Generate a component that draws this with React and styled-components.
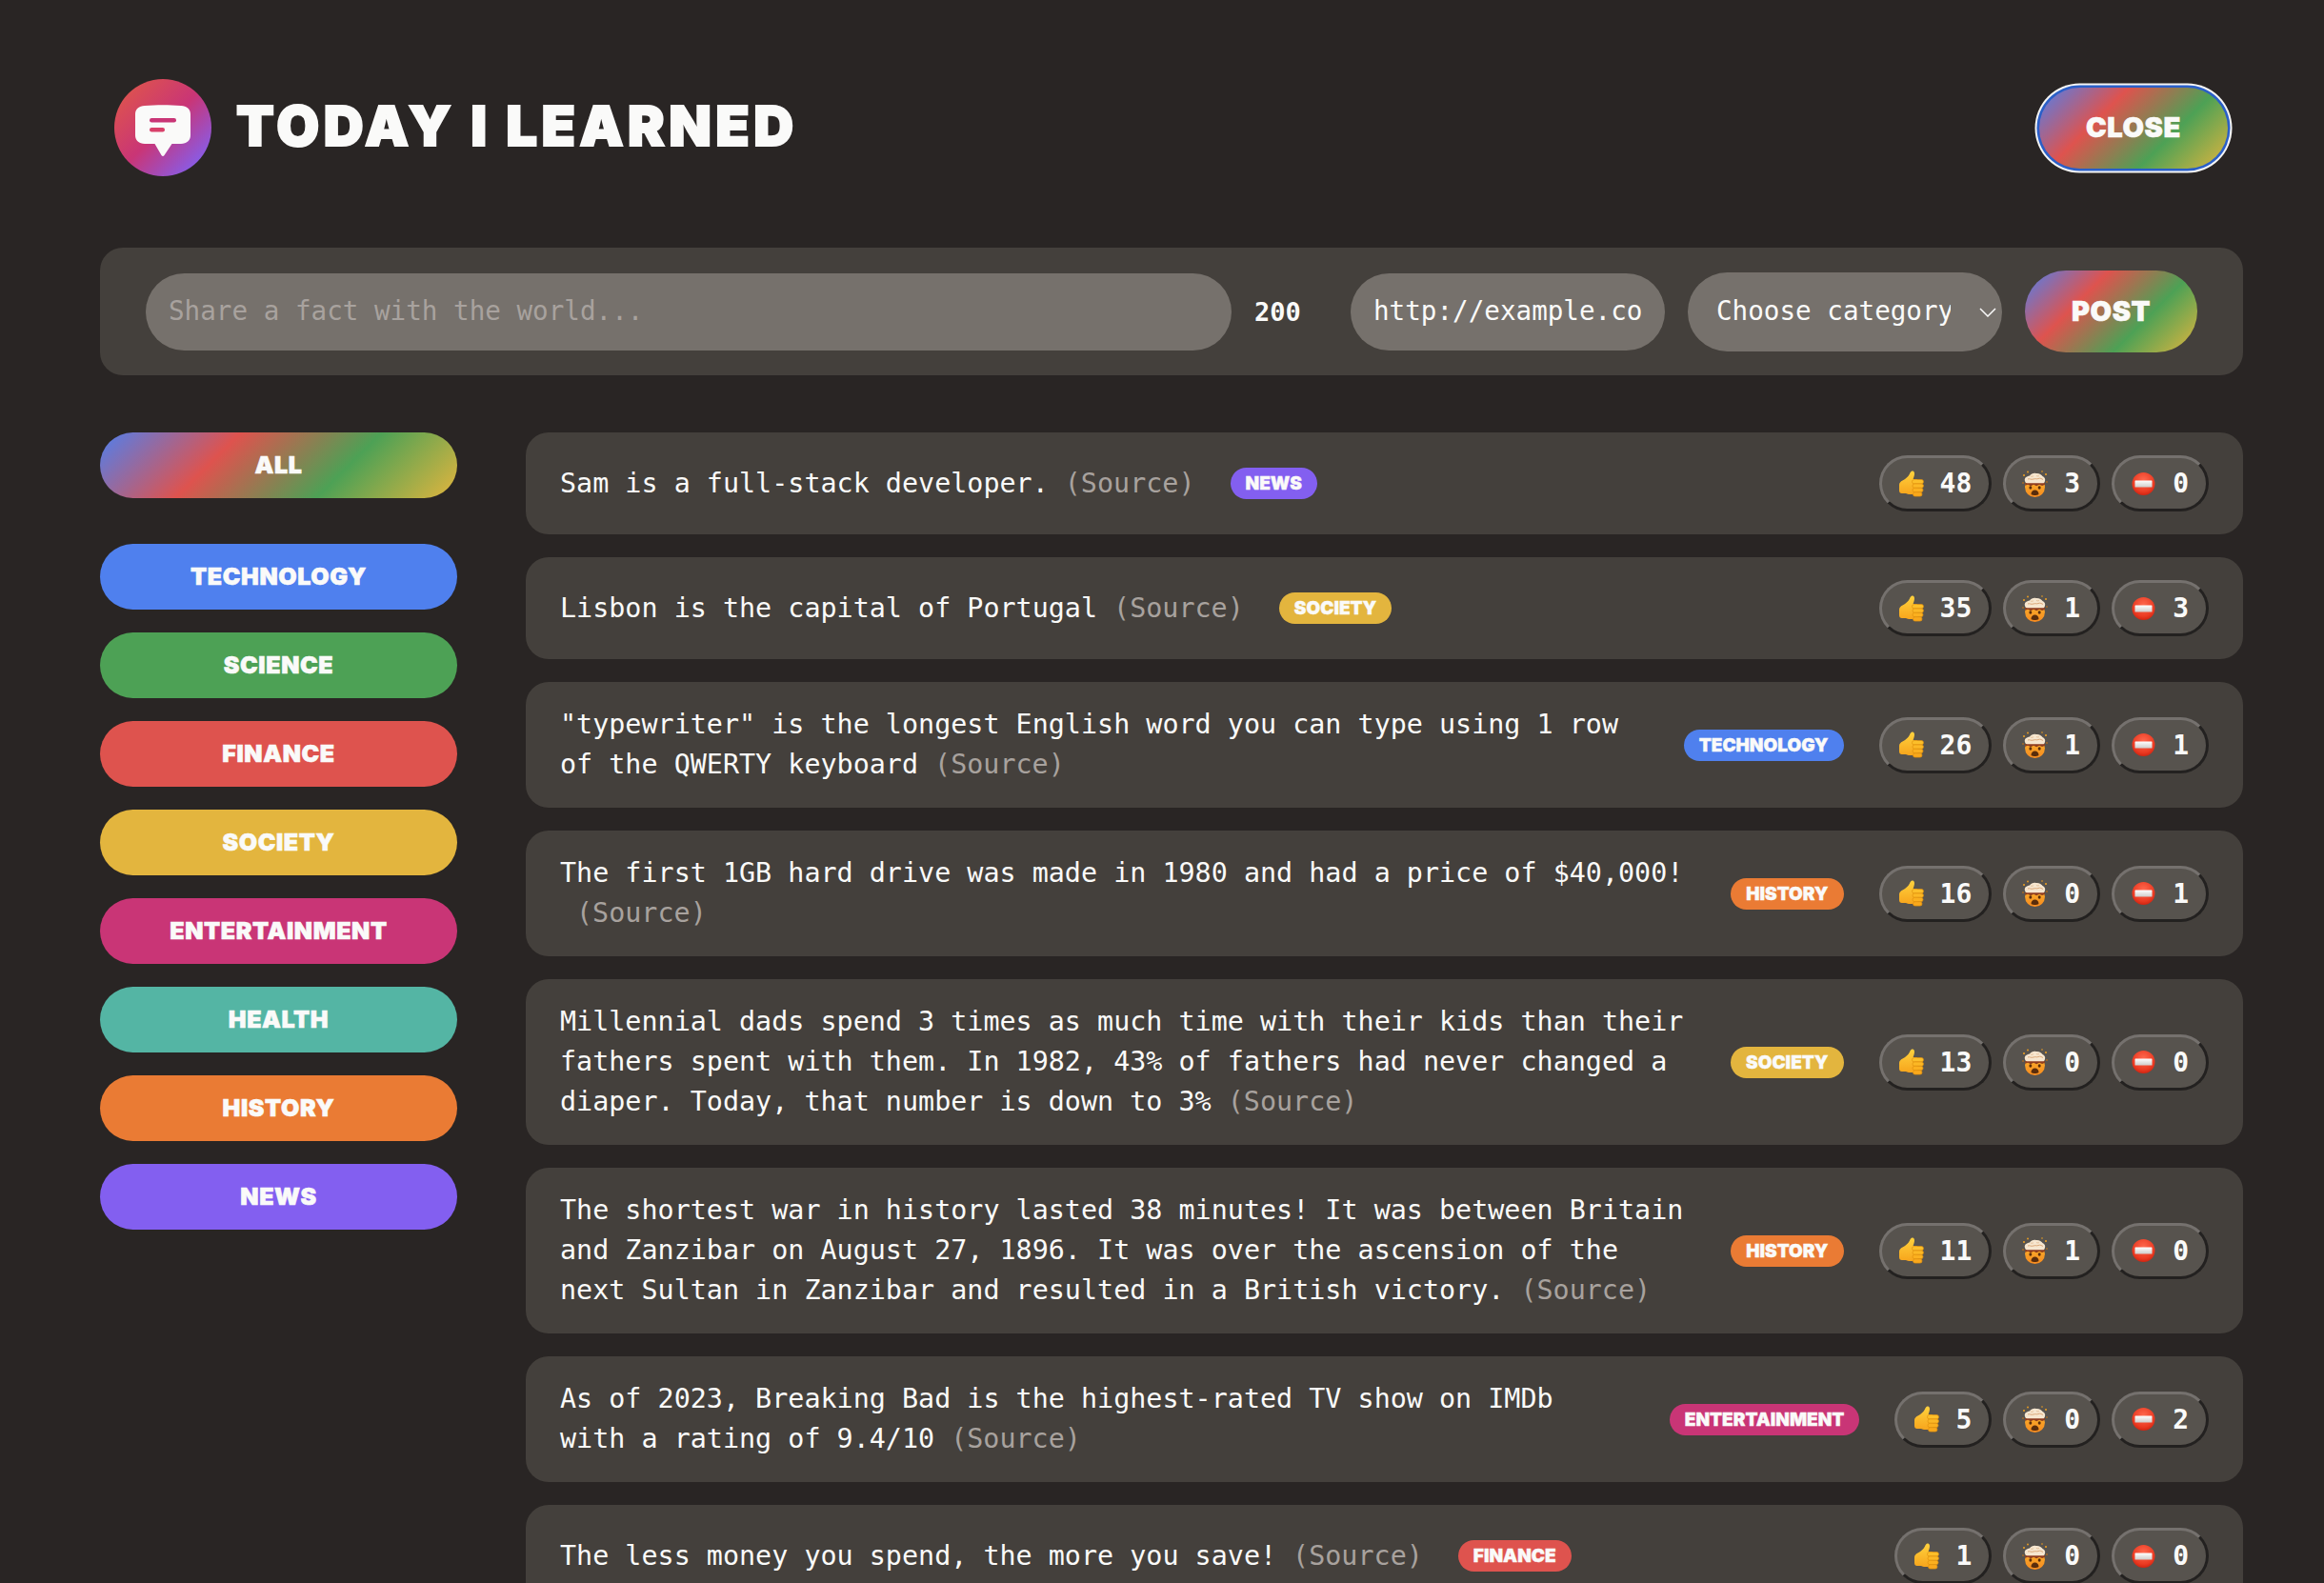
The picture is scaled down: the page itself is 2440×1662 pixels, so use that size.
import React from "react";
import styled, { createGlobalStyle } from "styled-components";

const RAINBOW = "linear-gradient(135deg, #4f80ee, #de534e, #4da155, #e3b53e)";
const MONO = '"DejaVu Sans Mono", "Liberation Mono", monospace';
const DISPLAY = '"Inter", "Lato", sans-serif';

const GlobalStyle = createGlobalStyle`
	* {
		margin: 0;
		padding: 0;
		box-sizing: border-box;
	}
	html, body {
		height: 100%;
		overflow: hidden;
		background-color: #292524;
		color: #fafaf9;
		font-family: ${MONO};
	}
`;

const CATEGORIES = [
	{ name: "technology", color: "#4f80ee" },
	{ name: "science", color: "#4da155" },
	{ name: "finance", color: "#de534e" },
	{ name: "society", color: "#e3b53e" },
	{ name: "entertainment", color: "#c93576" },
	{ name: "health", color: "#54b5a4" },
	{ name: "history", color: "#ea7b34" },
	{ name: "news", color: "#835ff0" },
];

const colorOf = (name) => CATEGORIES.find((c) => c.name === name).color;

const FACTS = [
	{ text: "Sam is a full-stack developer.", tag: "news", votes: [48, 3, 0] },
	{ text: "Lisbon is the capital of Portugal", tag: "society", votes: [35, 1, 3] },
	{
		text: '"typewriter" is the longest English word you can type using 1 row of the QWERTY keyboard',
		tag: "technology",
		votes: [26, 1, 1],
	},
	{
		text: "The first 1GB hard drive was made in 1980 and had a price of $40,000!",
		tag: "history",
		votes: [16, 0, 1],
	},
	{
		text: "Millennial dads spend 3 times as much time with their kids than their fathers spent with them. In 1982, 43% of fathers had never changed a diaper. Today, that number is down to 3%",
		tag: "society",
		votes: [13, 0, 0],
	},
	{
		text: "The shortest war in history lasted 38 minutes! It was between Britain and Zanzibar on August 27, 1896. It was over the ascension of the next Sultan in Zanzibar and resulted in a British victory.",
		tag: "history",
		votes: [11, 1, 0],
	},
	{
		text: "As of 2023, Breaking Bad is the highest-rated TV show on IMDb with a rating of 9.4/10",
		tag: "entertainment",
		votes: [5, 0, 2],
	},
	{ text: "The less money you spend, the more you save!", tag: "finance", votes: [1, 0, 0] },
];

const ThumbIcon = () => (
	<svg width="27" height="28" viewBox="0 0 27 28">
		<defs>
			<linearGradient id="thumbFill" x1="0" y1="0" x2="0" y2="1">
				<stop offset="0" stopColor="#ffd23e" />
				<stop offset="1" stopColor="#f7a51c" />
			</linearGradient>
		</defs>
		<path
			d="M1 15c0-2 1.500-3.500 3.500-4.500 3-1.500 6-4 7.500-7 .8-1.800 1.500-3.300 3.200-3 2 .3 2.200 3 1.400 5.500l-1 3h3.500c1 0 1.500 1 1.500 2v12c0 1.500-1 2-2 2h-6c-2 0-3.500-.5-5-1H4.500C2.500 24.500 1 23 1 21z"
			fill="url(#thumbFill)"
		/>
		<rect x="14.500" y="9.500" width="12" height="4.400" rx="2.200" fill="#fcbf2a" stroke="#e0900f" strokeWidth=".7" />
		<rect x="15" y="13.900" width="11.500" height="4.400" rx="2.200" fill="#fcb825" stroke="#e0900f" strokeWidth=".7" />
		<rect x="15" y="18.300" width="11" height="4.400" rx="2.200" fill="#fbb01f" stroke="#e0900f" strokeWidth=".7" />
		<rect x="15.500" y="22.700" width="9.500" height="4.400" rx="2.200" fill="#f9a81c" stroke="#e0900f" strokeWidth=".7" />
	</svg>
);

const MindBlownIcon = () => (
	<svg width="27" height="28" viewBox="0 0 27 28">
		<defs>
			<linearGradient id="faceFill" x1="0" y1="0" x2="0" y2="1">
				<stop offset="0" stopColor="#fbb62e" />
				<stop offset="1" stopColor="#f68a1f" />
			</linearGradient>
		</defs>
		<circle cx="13.500" cy="17.500" r="10.500" fill="url(#faceFill)" />
		<path d="M3.300 13h20.400l.4 1.800-3 1.200-3-1.200-3 1.400-3-1.400-3 1.400-3-1.400-2.900 1z" fill="#8f3d1f" />
		<path d="M3 11c-1-3 1.500-5 5-5.500C9.500 3.500 12 2.500 14.500 3c3-.5 6 1 7 3 2.500 1 3 3 2.500 5-.4 1.500-1 2.300-2 2.300H5c-1 0-1.600-1-2-2.300z" fill="#f6e6cf" />
		<path d="M6 9c2-1 3 1 6 0s3 .5 5-.5 4 .5 5 1" stroke="#dba777" strokeWidth="1" fill="none" />
		<path d="M9 6c1 .5 2 .3 3-.3M15 5.500c1 .5 2 .5 3 0" stroke="#e0b68c" strokeWidth=".8" fill="none" />
		<circle cx="2" cy="5" r="1" fill="#f0a020" />
		<circle cx="6" cy="1.500" r=".9" fill="#f0a020" />
		<circle cx="25" cy="4" r="1" fill="#f0a020" />
		<circle cx="21" cy="1" r=".8" fill="#f0a020" />
		<circle cx="1" cy="13" r=".8" fill="#d97a10" />
		<circle cx="26" cy="12" r=".8" fill="#d97a10" />
		<ellipse cx="8.800" cy="18" rx="1.500" ry="1.800" fill="#5a2d0c" />
		<ellipse cx="18.200" cy="18" rx="1.500" ry="1.800" fill="#5a2d0c" />
		<path d="M9.500 25c0-3 1.800-4.500 4-4.500s4 1.500 4 4.500c-1 .8-2.500 1-4 1s-3-.2-4-1z" fill="#5a2d0c" />
	</svg>
);

const NoEntryIcon = () => (
	<svg width="27" height="24" viewBox="-1.500 0 27 24">
		<defs>
			<radialGradient id="noEntryFill" cx="0.5" cy="0.35" r="0.7">
				<stop offset="0" stopColor="#ff6a50" />
				<stop offset="0.7" stopColor="#ea3a22" />
				<stop offset="1" stopColor="#c81e0c" />
			</radialGradient>
			<linearGradient id="noEntryBar" x1="0" y1="0" x2="0" y2="1">
				<stop offset="0" stopColor="#ffffff" />
				<stop offset="1" stopColor="#cfccca" />
			</linearGradient>
		</defs>
		<circle cx="12" cy="12" r="12" fill="url(#noEntryFill)" />
		<rect x="3" y="8.500" width="18" height="7" rx=".5" fill="url(#noEntryBar)" />
	</svg>
);

const LogoIcon = () => (
	<svg width="102" height="102" viewBox="0 0 102 102">
		<defs>
			<linearGradient id="logoBg" x1="0.1" y1="0.1" x2="0.9" y2="0.9">
				<stop offset="0" stopColor="#de534e" />
				<stop offset="0.5" stopColor="#c93576" />
				<stop offset="1" stopColor="#835ff0" />
			</linearGradient>
		</defs>
		<circle cx="51" cy="51" r="51" fill="url(#logoBg)" />
		<path
			d="M32 28c12-1 26-1 38 0 6 .5 10 3 10 9v22c0 6-4 8.500-10 9H60.500l-8 12c-1 1.300-2 1.300-3 0l-7-12H32c-6-.5-10-3-10-9V37c0-6 4-8.500 10-9z"
			fill="#fafaf9"
		/>
		<rect x="37" y="41" width="28" height="4.500" rx="2.250" fill="#c93576" />
		<rect x="37" y="51" width="16" height="4.500" rx="2.250" fill="#d8406a" />
	</svg>
);

const Chevron = () => (
	<ChevronMark width="18" height="10" viewBox="0 0 18 10">
		<path d="M1 1l8 8 8-8" fill="none" stroke="#fafaf9" strokeWidth="1.500" />
	</ChevronMark>
);

const Page = () => (
	<Wrapper>
		<Header>
			<Brand>
				<LogoIcon />
				<Title>Today I Learned</Title>
			</Brand>
			<CloseButton>Close</CloseButton>
		</Header>

		<FactForm>
			<FactInput placeholder="Share a fact with the world..." />
			<CharCount>200</CharCount>
			<UrlInput defaultValue="http://example.com" />
			<SelectWrap>
				<CategorySelect>
					<option>Choose category:</option>
				</CategorySelect>
				<Chevron />
			</SelectWrap>
			<PostButton>Post</PostButton>
		</FactForm>

		<Content>
			<Sidebar>
				<AllButton>All</AllButton>
				{CATEGORIES.map((c) => (
					<CategoryButton key={c.name} $color={c.color}>
						{c.name}
					</CategoryButton>
				))}
			</Sidebar>
			<FactList>
				{FACTS.map((f) => (
					<Fact key={f.text}>
						<FactText>
							{f.text}
							<Source>(Source)</Source>
						</FactText>
						<Tag $color={colorOf(f.tag)}>{f.tag}</Tag>
						<VoteButtons>
							<VoteButton>
								<ThumbIcon />
								<VoteCount>{f.votes[0]}</VoteCount>
							</VoteButton>
							<VoteButton>
								<MindBlownIcon />
								<VoteCount>{f.votes[1]}</VoteCount>
							</VoteButton>
							<VoteButton>
								<NoEntryIcon />
								<VoteCount>{f.votes[2]}</VoteCount>
							</VoteButton>
						</VoteButtons>
					</Fact>
				))}
			</FactList>
		</Content>
	</Wrapper>
);

const Wrapper = styled.div`
	padding: 83px 85px 0 105px;
`;

const Header = styled.header`
	display: flex;
	align-items: center;
	justify-content: space-between;
	margin-bottom: 75px;
	padding: 0 16px 0 15px;
`;

const Brand = styled.div`
	display: flex;
	align-items: center;
	gap: 26px;
`;

const Title = styled.h1`
	padding-bottom: 5px;
	font-family: ${DISPLAY};
	font-weight: 900;
	font-size: 58px;
	line-height: 1;
	letter-spacing: 4.4px;
	text-transform: uppercase;
	color: #fafaf9;
	-webkit-text-stroke: 2px #fafaf9;
`;

const HeavyButton = styled.button`
	padding-bottom: 2px;
	font-family: ${DISPLAY};
	font-weight: 900;
	letter-spacing: 0.6px;
	text-transform: uppercase;
	color: #fafaf9;
	border: none;
	border-radius: 100px;
	-webkit-text-stroke: 0.6px #fafaf9;
`;

const CloseButton = styled(HeavyButton)`
	width: 198px;
	height: 85px;
	font-size: 29px;
	background-image: ${RAINBOW};
	box-shadow: 0 0 0 2.5px #2a5fc8, 0 0 0 4.5px #f5f5f4;
`;

const FactForm = styled.form`
	display: flex;
	align-items: center;
	height: 134px;
	padding: 0 48px;
	margin-bottom: 60px;
	background-color: #44403c;
	border-radius: 24px;
`;

const Field = styled.input`
	height: 81px;
	padding: 0 24px 2px;
	font-family: inherit;
	font-size: 27.6px;
	color: #fafaf9;
	background-color: #76716c;
	border: none;
	border-radius: 100px;
	outline: none;
	&::placeholder {
		color: #a8a29e;
	}
`;

const FactInput = styled(Field)`
	width: 1140px;
`;

const CharCount = styled.span`
	width: 101px;
	margin-left: 24px;
	font-size: 27px;
	font-weight: 700;
`;

const UrlInput = styled(Field)`
	width: 330px;
	margin-right: 24px;
`;

const SelectWrap = styled.div`
	position: relative;
	margin-right: 24px;
`;

const CategorySelect = styled.select`
	display: block;
	appearance: none;
	width: 330px;
	height: 83px;
	padding: 0 54px 2px 30px;
	font-family: inherit;
	font-size: 27.6px;
	color: #fafaf9;
	background-color: #76716c;
	border: none;
	border-radius: 100px;
	outline: none;
`;

const ChevronMark = styled.svg`
	position: absolute;
	right: 6px;
	top: 37px;
	pointer-events: none;
`;

const PostButton = styled(HeavyButton)`
	width: 181px;
	height: 86px;
	font-size: 29px;
	background-image: ${RAINBOW};
`;

const Content = styled.div`
	display: grid;
	grid-template-columns: 375px 1fr;
	column-gap: 72px;
`;

const Sidebar = styled.aside`
	display: flex;
	flex-direction: column;
	gap: 24px;
`;

const CategoryButton = styled(HeavyButton)`
	width: 100%;
	height: 69px;
	font-size: 25px;
	background-color: ${(props) => props.$color};
`;

const AllButton = styled(CategoryButton)`
	margin-bottom: 24px;
	background-image: ${RAINBOW};
`;

const FactList = styled.ul`
	display: flex;
	flex-direction: column;
	gap: 24px;
	list-style: none;
`;

const Fact = styled.li`
	display: flex;
	align-items: center;
	gap: 37px;
	padding: 24px 36px;
	background-color: #44403c;
	border-radius: 24px;
	font-size: 28.4px;
	line-height: 42px;
`;

const FactText = styled.p`
	white-space: pre-line;
`;

const Source = styled.a`
	margin-left: 17px;
	color: #a8a29e;
`;

const Tag = styled.span`
	flex-shrink: 0;
	padding: 0 16px;
	height: 33px;
	font-family: ${DISPLAY};
	font-weight: 900;
	font-size: 19px;
	line-height: 33px;
	text-transform: uppercase;
	color: #fafaf9;
	border-radius: 100px;
	background-color: ${(props) => props.$color};
	-webkit-text-stroke: 0.4px #fafaf9;
`;

const VoteButtons = styled.div`
	display: flex;
	flex-shrink: 0;
	gap: 12px;
	margin-left: auto;
`;

const VoteButton = styled.button`
	display: flex;
	align-items: center;
	gap: 17px;
	height: 59px;
	padding: 0 18px 0 17px;
	color: #fafaf9;
	background-color: #57534e;
	border-style: solid;
	border-width: 3px;
	border-color: #75716e #232120 #232120 #75716e;
	border-radius: 100px;
`;

const VoteCount = styled.span`
	font-family: ${MONO};
	font-size: 28px;
	font-weight: 700;
`;

const App = () => (
	<>
		<GlobalStyle />
		<Page />
	</>
);

export default App;
